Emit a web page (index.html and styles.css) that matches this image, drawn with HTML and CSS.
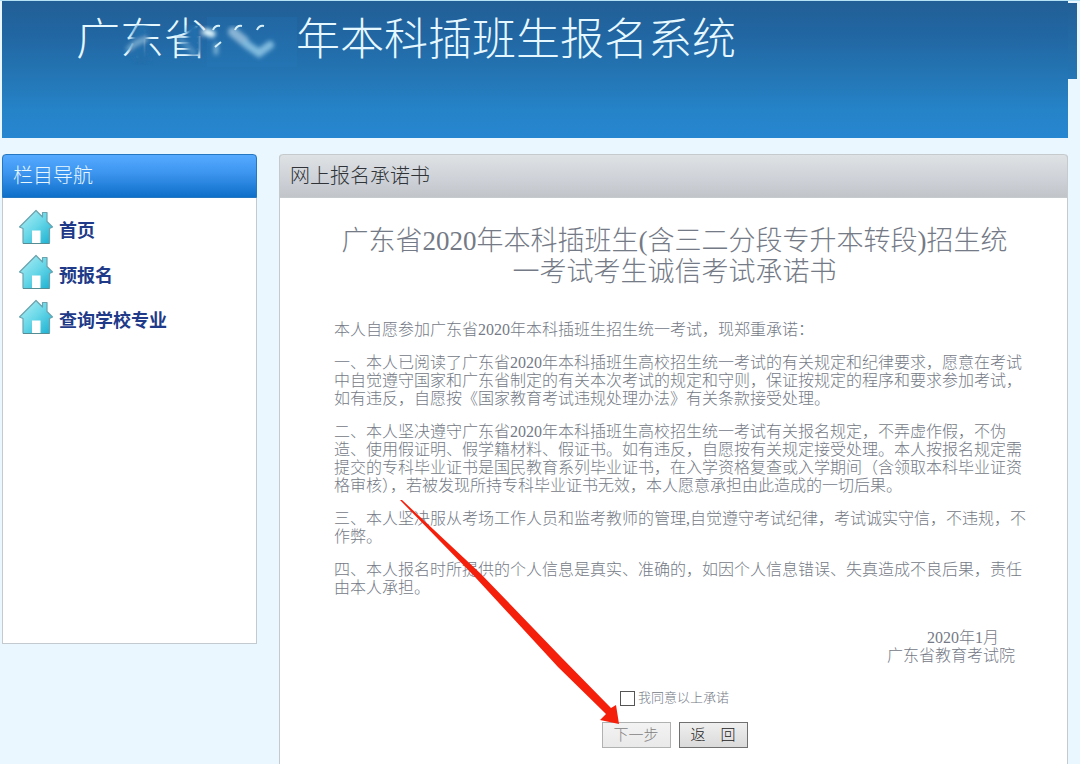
FILE: index.html
```html
<!DOCTYPE html>
<html lang="zh-CN">
<head>
<meta charset="utf-8">
<title>本科插班生报名系统</title>
<link rel="stylesheet" href="styles.css">
</head>
<body>
<svg class="defs" aria-hidden="true">
  <defs>
    <linearGradient id="roof" x1="0" y1="0" x2="1" y2="1">
      <stop offset="0" stop-color="#b5f0f4"/>
      <stop offset="0.5" stop-color="#68d7e8"/>
      <stop offset="1" stop-color="#17aed0"/>
    </linearGradient>
    <symbol id="house" viewBox="0 0 36 36">
      <path d="M18 1.5 24.5 8V3.5H29V12.500L34.500 18 31.500 19.500V33.500Q31.500 34.500 30.500 34.500H6Q5 34.500 5 33.500V19.500L1.500 18Z" fill="url(#roof)" stroke="#6aa3ad" stroke-width="1.200" stroke-linejoin="round"/>
      <path d="M14 34V21.500H22.500V34Z" fill="#fff"/>
      <path d="M5 34.500H31.500" stroke="#568c94" stroke-width="1"/>
    </symbol>
  </defs>
</svg>
<header class="banner">
  <h1 class="banner-title">广东省2020年本科插班生报名系统</h1>
  <svg class="smudge" viewBox="0 0 200 50" aria-hidden="true">
    <defs>
      <filter id="soft" x="-20%" y="-20%" width="140%" height="140%"><feGaussianBlur stdDeviation="2"/></filter>
      <linearGradient id="cover" x1="0" y1="0" x2="0" y2="1">
        <stop offset="0" stop-color="#2167a3"/>
        <stop offset="1" stop-color="#2474b3"/>
      </linearGradient>
    </defs>
    <rect x="87" y="0" width="90" height="50" fill="url(#cover)"/>
    <g filter="url(#soft)" fill="none" stroke-linecap="round">
      <path d="M22 15Q16 26 22 42" stroke="#226eab" stroke-width="15"/>
      <path d="M74 14V32" stroke="#226dab" stroke-width="14"/>
      <path d="M8 32Q16 25 26 22" stroke="#79afd2" stroke-width="4"/>
      <path d="M60 22 74 36" stroke="#4f92c3" stroke-width="4"/>
      <path d="M86 15 92 17" stroke="#e2f8fd" stroke-width="7"/>
      <path d="M113 15 124 24" stroke="#88b4d5" stroke-width="10"/>
      <path d="M126 27 139 36 150 28" stroke="#80bade" stroke-width="8"/>
      <path d="M96 28V36" stroke="#86bad9" stroke-width="4"/>
    </g>
    <path d="M93 13q2-5 7-4M115 13q2-5 7-4M137 13q2-5 7-4M95 30 101 25" fill="none" stroke="#d8f1f8" stroke-width="2"/>
  </svg>
</header>
<main class="layout">
  <aside class="panel sidebar">
    <h2 class="panel-head blue">栏目导航</h2>
    <nav class="menu">
      <a href="#"><svg><use href="#house"/></svg><span>首页</span></a>
      <a href="#"><svg><use href="#house"/></svg><span>预报名</span></a>
      <a href="#"><svg><use href="#house"/></svg><span>查询学校专业</span></a>
    </nav>
  </aside>
  <section class="panel content">
    <h2 class="panel-head gray">网上报名承诺书</h2>
    <article class="pledge">
      <h3>广东省2020年本科插班生(含三二分段专升本转段)招生统<br>一考试考生诚信考试承诺书</h3>
      <div class="terms">
        <p>本人自愿参加广东省2020年本科插班生招生统一考试，现郑重承诺：</p>
        <p>一、本人已阅读了广东省2020年本科插班生高校招生统一考试的有关规定和纪律要求，愿意在考试<br>中自觉遵守国家和广东省制定的有关本次考试的规定和守则，保证按规定的程序和要求参加考试，<br>如有违反，自愿按《国家教育考试违规处理办法》有关条款接受处理。</p>
        <p>二、本人坚决遵守广东省2020年本科插班生高校招生统一考试有关报名规定，不弄虚作假，不伪<br>造、使用假证明、假学籍材料、假证书。如有违反，自愿按有关规定接受处理。本人按报名规定需<br>提交的专科毕业证书是国民教育系列毕业证书，在入学资格复查或入学期间（含领取本科毕业证资<br>格审核），若被发现所持专科毕业证书无效，本人愿意承担由此造成的一切后果。</p>
        <p>三、本人坚决服从考场工作人员和监考教师的管理,自觉遵守考试纪律，考试诚实守信，不违规，不<br>作弊。</p>
        <p>四、本人报名时所提供的个人信息是真实、准确的，如因个人信息错误、失真造成不良后果，责任<br>由本人承担。</p>
      </div>
      <div class="signature">
        <span class="date">2020年1月</span>
        <span>广东省教育考试院</span>
      </div>
      <form class="actions">
        <label class="agree"><input type="checkbox"><span>我同意以上承诺</span></label>
        <div class="buttons">
          <button type="button" disabled>下一步</button>
          <button type="button">返　回</button>
        </div>
      </form>
    </article>
    <svg class="arrow" viewBox="0 0 220 226" aria-hidden="true">
      <path d="M0 0 2 0 80 73 161 157 211 208 216 205 219 224 200 220 206 214 158 167 75 77Z" fill="#f5200c"/>
    </svg>
  </section>
</main>
</body>
</html>
```

FILE: styles.css
```css
* { box-sizing: border-box; }

body {
  margin: 0;
  min-height: 100vh;
  display: flex;
  flex-direction: column;
  gap: 16px;
  padding: 0 12px 0 2px;
  border-top: 1px solid #b5e2f4;
  background: #ebf7ff;
  color: #747a86;
  font: 300 16px/18px "Liberation Serif", "Noto Sans CJK SC", serif;
}

h1, h2, h3, p { margin: 0; font-weight: 300; }

.defs { position: absolute; width: 0; height: 0; }

.banner {
  position: relative;
  height: 137px;
  padding: 14px 74px;
  background: linear-gradient(#225f96, #2166a2 24%, #2476b5 55%, #2583c8 80%, #2686d0);
}

.banner::after {
  content: "";
  position: absolute;
  top: 2px;
  left: 100%;
  width: 9px;
  height: 76px;
  background: linear-gradient(#225f96, #2476b5);
}

.banner-title {
  color: #e6f8ff;
  font-size: 44px;
  line-height: 52px;
  white-space: nowrap;
}

.smudge {
  position: absolute;
  left: 118px;
  top: 16px;
  width: 200px;
  height: 50px;
}

.layout {
  flex: 1;
  display: grid;
  grid-template-columns: 255px minmax(0, 1fr);
  gap: 22px;
}

.panel {
  background: #fff;
  border: 1px solid #c3cbd1;
  border-top: 0;
  border-radius: 4px 4px 0 0;
}

.sidebar {
  align-self: start;
  min-height: 490px;
}

.content {
  position: relative;
  border-bottom: 0;
}

.panel-head {
  margin: 0 -1px;
  padding: 0 10px;
  font-size: 20px;
  line-height: 42px;
  border-radius: 4px 4px 0 0;
}

.blue {
  color: #e8f6ff;
  border: 1px solid #2577c2;
  background: linear-gradient(#56aaff, #3b94ee 45%, #0e6fc9);
}

.gray {
  color: #303438;
  border: 1px solid #c5cacd;
  background: linear-gradient(#dee2e4, #cfd3d9 55%, #c1c4c9);
}

.menu {
  display: grid;
  gap: 9px;
  padding: 11px 15px;
}

.menu a {
  display: flex;
  gap: 5px;
  color: #1e3a88;
  font-size: 18px;
  font-weight: 700;
  line-height: 44px;
  height: 36px;
  text-decoration: none;
}

.menu svg { width: 36px; height: 36px; }

.pledge { padding: 28px 52px 14px 54px; }

.pledge h3 {
  font-size: 27px;
  line-height: 31px;
  text-align: center;
  white-space: nowrap;
}

.terms {
  display: grid;
  gap: 15px;
  padding-top: 33px;
  white-space: nowrap;
}

.signature {
  display: flex;
  flex-direction: column;
  align-items: flex-end;
  padding-top: 32px;
}

.date { padding-right: 16px; }

.actions {
  display: flex;
  flex-direction: column;
  align-items: center;
  gap: 15px;
  padding-top: 24px;
}

.agree {
  display: flex;
  align-items: center;
  gap: 3px;
  font-size: 13px;
}

.agree input {
  appearance: none;
  width: 15px;
  height: 15px;
  margin: 0;
  border: 1px solid #555;
  background: #fff;
}

.buttons { display: flex; gap: 8px; }

.buttons button {
  width: 69px;
  height: 26px;
  padding: 0;
  border: 1px solid #707070;
  background: linear-gradient(#efefef, #dadada);
  color: #222;
  font: inherit;
  font-size: 15px;
}

.buttons button:disabled {
  border-color: #b0b2b2;
  background: linear-gradient(#f3f3f3, #e9e9e9);
  color: #808080;
}

.arrow {
  position: absolute;
  left: 120px;
  top: 346px;
  width: 220px;
  height: 226px;
}
```
